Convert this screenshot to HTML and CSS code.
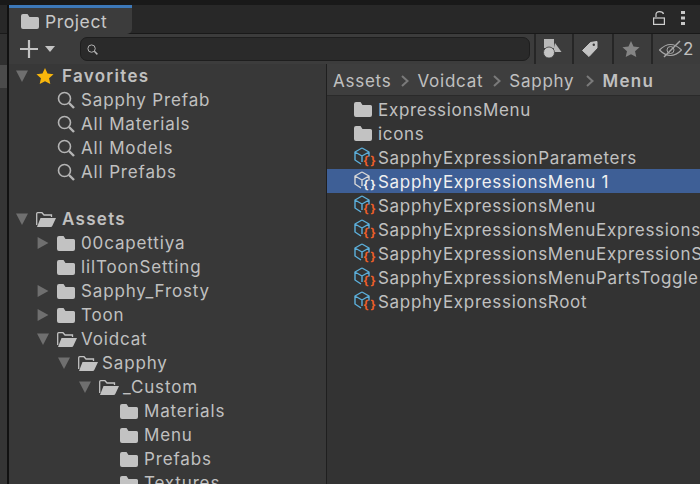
FILE: index.html
```html
<!DOCTYPE html>
<html lang="en">
<head>
<meta charset="utf-8">
<title>Project</title>
<link rel="stylesheet" href="styles.css">
</head>
<body>
<svg class="defs" width="0" height="0" aria-hidden="true">
  <defs>
    <symbol id="folder" viewBox="0 0 18 15"><path d="M0 2Q0 0 2 0H6.500L8.500 3H16.500Q18 3 18 4.500V13Q18 15 16 15H2Q0 15 0 13Z" fill="#c2c2c2"/></symbol>
    <symbol id="open" viewBox="0 0 20 15"><path d="M0.700 13V1.700Q0.700 0.700 1.700 0.700H6L8 3H15.500V5" fill="none" stroke="#c2c2c2" stroke-width="1.300"/><path d="M1 15L4.500 6H20L16.500 13.500Q16 15 14.500 15Z" fill="#c2c2c2"/></symbol>
    <symbol id="mag" viewBox="0 0 18 18"><circle cx="7.500" cy="7.500" r="6" fill="none" stroke="#b4b4b4" stroke-width="1.600"/><path d="M12 12L17 17" stroke="#b4b4b4" stroke-width="2.400"/></symbol>
    <symbol id="asset" viewBox="0 0 16 18"><path d="M8 1L15 5V9.500M8 1L1 5V13L7 17M1 5L8 9L15 5M8 9V15" fill="none" stroke="currentColor" stroke-width="1.400" stroke-linejoin="round"/></symbol>
    <symbol id="chev" viewBox="0 0 8 12"><path d="M1 1L6.500 6L1 11" fill="none" stroke="#7a7a7a" stroke-width="2"/></symbol>
  </defs>
</svg>
<div class="window">
  <div class="sidebar-strip"></div>
  <main class="panel">
    <header class="tabbar">
      <div class="tab"><svg class="tab-icon"><use href="#folder"/></svg><span>Project</span></div>
      <div class="tab-tools">
        <svg class="lock" viewBox="0 0 12 14"><path d="M3 6V3.500Q3 0.700 6.500 0.700T10.500 3" fill="none" stroke="#d0d0d0" stroke-width="1.200"/><rect x="0.600" y="7" width="10.800" height="6.400" fill="none" stroke="#d0d0d0" stroke-width="1.200"/></svg>
        <svg class="kebab" viewBox="0 0 4 14"><rect width="4" height="3" fill="#c8c8c8"/><rect y="5.500" width="4" height="3" fill="#c8c8c8"/><rect y="11" width="4" height="3" fill="#c8c8c8"/></svg>
      </div>
    </header>
    <div class="toolbar">
      <div class="add">
        <svg class="plus" viewBox="0 0 18 18"><path d="M9 0V18M0 9H18" stroke="#c4c4c4" stroke-width="2.200"/></svg>
        <span class="add-caret"></span>
      </div>
      <div class="search"><svg class="search-mag"><use href="#mag"/></svg></div>
      <div class="tool t1"><svg class="tool-icon" viewBox="0 0 20 20"><rect x="1" y="0" width="10" height="9" fill="#b8b8b8"/><path d="M12 4L18.500 13H10Z" fill="#b8b8b8"/><circle cx="6" cy="13.500" r="5.500" fill="#c4c4c4" stroke="#3c3c3c" stroke-width="0.800"/></svg></div>
      <div class="tool t2"><svg class="tag" viewBox="0 0 16 16"><path d="M0.500 9.500L8.500 1.500L15 0.500L15 7L7 15.500Z" fill="#c4c4c4" stroke="#c4c4c4" stroke-linejoin="round"/><circle cx="11.800" cy="3.800" r="1.200" fill="#3c3c3c"/></svg></div>
      <div class="tool t3"><svg class="fav" viewBox="0 0 20 20"><path d="M10 1L12.800 7.200L19.500 8L14.500 12.400L15.900 19L10 15.700L4.100 19L5.500 12.400L0.500 8L7.200 7.200Z" fill="#858585"/></svg></div>
      <div class="tool tool-last"><svg class="eye" viewBox="0 0 23 18"><path d="M0.500 10Q6 4.500 11.500 4.500T22.500 10Q17 15.500 11.500 15.500T0.500 10Z" fill="none" stroke="#a6a6a6" stroke-width="1.200"/><circle cx="11.500" cy="10" r="3.500" fill="none" stroke="#a6a6a6"/><path d="M5 17L21 1" stroke="#a6a6a6" stroke-width="1.500"/></svg><span>2</span></div>
    </div>
    <div class="columns">
      <nav class="tree">
        <div class="row lvl0 bold"><span class="caret down"></span><svg class="star" viewBox="0 0 20 20"><path d="M10 1L12.800 7.200L19.500 8L14.500 12.400L15.900 19L10 15.700L4.100 19L5.500 12.400L0.500 8L7.200 7.200Z" fill="#f8b60c"/></svg><span>Favorites</span></div>
        <div class="row lvl1"><span class="caret none"></span><svg class="ic-mag"><use href="#mag"/></svg><span>Sapphy Prefab</span></div>
        <div class="row lvl1"><span class="caret none"></span><svg class="ic-mag"><use href="#mag"/></svg><span>All Materials</span></div>
        <div class="row lvl1"><span class="caret none"></span><svg class="ic-mag"><use href="#mag"/></svg><span>All Models</span></div>
        <div class="row lvl1"><span class="caret none"></span><svg class="ic-mag"><use href="#mag"/></svg><span>All Prefabs</span></div>
        <div class="row spacer"></div>
        <div class="row lvl0 bold"><span class="caret down"></span><svg class="ic-open"><use href="#open"/></svg><span>Assets</span></div>
        <div class="row lvl1"><span class="caret right"></span><svg class="ic-folder"><use href="#folder"/></svg><span>00capettiya</span></div>
        <div class="row lvl1"><span class="caret none"></span><svg class="ic-folder"><use href="#folder"/></svg><span>lilToonSetting</span></div>
        <div class="row lvl1"><span class="caret right"></span><svg class="ic-folder"><use href="#folder"/></svg><span>Sapphy_Frosty</span></div>
        <div class="row lvl1"><span class="caret right"></span><svg class="ic-folder"><use href="#folder"/></svg><span>Toon</span></div>
        <div class="row lvl1"><span class="caret down"></span><svg class="ic-open"><use href="#open"/></svg><span>Voidcat</span></div>
        <div class="row lvl2"><span class="caret down"></span><svg class="ic-open"><use href="#open"/></svg><span>Sapphy</span></div>
        <div class="row lvl3"><span class="caret down"></span><svg class="ic-open"><use href="#open"/></svg><span>_Custom</span></div>
        <div class="row lvl4"><span class="caret none"></span><svg class="ic-folder"><use href="#folder"/></svg><span>Materials</span></div>
        <div class="row lvl4"><span class="caret none"></span><svg class="ic-folder"><use href="#folder"/></svg><span>Menu</span></div>
        <div class="row lvl4"><span class="caret none"></span><svg class="ic-folder"><use href="#folder"/></svg><span>Prefabs</span></div>
        <div class="row lvl4"><span class="caret none"></span><svg class="ic-folder"><use href="#folder"/></svg><span>Textures</span></div>
      </nav>
      <section class="content">
        <div class="crumbs">
          <span>Assets</span><svg class="sep"><use href="#chev"/></svg><span>Voidcat</span><svg class="sep"><use href="#chev"/></svg><span>Sapphy</span><svg class="sep sep-last"><use href="#chev"/></svg><span class="bold">Menu</span>
        </div>
        <div class="files">
          <div class="file"><svg class="f-folder"><use href="#folder"/></svg><span>ExpressionsMenu</span></div>
          <div class="file"><svg class="f-folder"><use href="#folder"/></svg><span>icons</span></div>
          <div class="file"><span class="asset"><svg><use href="#asset"/></svg><b>{}</b></span><span>SapphyExpressionParameters</span></div>
          <div class="file selected"><span class="asset"><svg><use href="#asset"/></svg><b>{}</b></span><span>SapphyExpressionsMenu 1</span></div>
          <div class="file"><span class="asset"><svg><use href="#asset"/></svg><b>{}</b></span><span>SapphyExpressionsMenu</span></div>
          <div class="file"><span class="asset"><svg><use href="#asset"/></svg><b>{}</b></span><span>SapphyExpressionsMenuExpressions</span></div>
          <div class="file"><span class="asset"><svg><use href="#asset"/></svg><b>{}</b></span><span>SapphyExpressionsMenuExpressionS</span></div>
          <div class="file"><span class="asset"><svg><use href="#asset"/></svg><b>{}</b></span><span>SapphyExpressionsMenuPartsToggle</span></div>
          <div class="file"><span class="asset"><svg><use href="#asset"/></svg><b>{}</b></span><span>SapphyExpressionsRoot</span></div>
        </div>
      </section>
    </div>
  </main>
</div>
</body>
</html>
```
FILE: styles.css
```css
* { box-sizing: border-box; }
html, body { margin: 0; height: 100%; overflow: hidden; background: #191919; }
body { font-family: Inter, "Liberation Sans", sans-serif; font-size: 17px; color: #c0c0c0; }
.defs { position: absolute; }
.window { display: flex; width: 700px; height: 484px; padding-top: 5px; overflow: hidden; }
.sidebar-strip { width: 7px; flex: none; background: linear-gradient(#282828 0 28px, #1a1a1a 28px 29px, #303030 29px 60px, #4b4b4b 60px 83px, #353535 83px); }
.panel { flex: 1; min-width: 0; display: flex; flex-direction: column; border-left: 2px solid #111; }
.tabbar { height: 29px; flex: none; display: flex; justify-content: space-between; background: #282828; border-bottom: 1px solid #191919; }
.tab { width: 123px; height: 29px; display: flex; align-items: center; gap: 6px; padding-left: 12px; background: #3c3c3c; border-top: 3px solid #3d78b8; border-radius: 0 0 5px 0; color: #c8c8c8; font-size: 17.500px; letter-spacing: 0.600px; }
.tab-icon { width: 18px; height: 15px; }
.tab-tools { display: flex; align-items: center; gap: 16px; padding: 0 15px 2px 0; }
.lock { width: 12px; height: 14px; }
.kebab { width: 4px; height: 14px; }
.toolbar { height: 30px; flex: none; display: flex; align-items: center; background: #3c3c3c; }
.add { width: 71px; flex: none; display: flex; align-items: center; gap: 7px; padding-left: 11px; }
.plus { width: 18px; height: 18px; }
.add-caret { width: 0; height: 0; border: 5px solid transparent; border-top: 6px solid #c4c4c4; border-bottom: 0; }
.search { flex: 1; height: 24px; background: #2a2a2a; border: 1px solid #1e1e1e; border-radius: 7px; display: flex; align-items: center; padding-left: 6px; margin-right: 4px; }
.search-mag { width: 11px; height: 11px; }
.tool { height: 30px; flex: none; display: flex; align-items: center; justify-content: center; border-left: 2px solid #262626; }
.t1 { width: 38px; padding-right: 3px; }
.t2 { width: 40px; padding-right: 7px; }
.t3 { width: 39px; padding-right: 4px; }
.tool-icon { width: 20px; height: 20px; }
.tag { width: 16px; height: 16px; }
.fav { width: 18px; height: 18px; }
.tool-last { width: 49px; gap: 1px; justify-content: flex-start; padding-left: 6px; }
.eye { width: 23px; height: 18px; flex: none; }
.columns { flex: 1; min-height: 0; display: flex; }
.tree { width: 318px; flex: none; background: #383838; border-right: 1px solid #1f1f1f; overflow: hidden; }
.row { height: 24px; display: flex; align-items: center; white-space: nowrap; letter-spacing: 0.850px; }
.spacer { height: 23px; }
.caret { width: 12px; height: 12px; flex: none; margin-right: 8px; }
.caret.down { background: #6f6f6f; clip-path: polygon(0 5%, 100% 5%, 50% 100%); }
.caret.right { background: #6f6f6f; clip-path: polygon(5% 0, 95% 50%, 5% 100%); }
.lvl0 { padding-left: 7px; }
.lvl1 { padding-left: 28px; }
.lvl2 { padding-left: 49px; }
.lvl3 { padding-left: 70px; }
.lvl4 { padding-left: 91px; }
.bold { font-weight: 600; letter-spacing: 1.300px; }
.star { width: 18px; height: 18px; margin-right: 8px; }
.ic-mag { width: 18px; height: 18px; margin-right: 6px; }
.ic-folder { width: 18px; height: 15px; margin-right: 6px; }
.ic-open { width: 20px; height: 15px; margin-right: 4px; }
.lvl0 .ic-open { margin-right: 6px; }
.content { flex: 1; min-width: 0; display: flex; flex-direction: column; background: #333; }
.crumbs { height: 32px; flex: none; display: flex; align-items: center; padding: 2px 0 0 6px; background: #3e3e3e; border-bottom: 1px solid #2a2a2a; letter-spacing: 0.750px; white-space: nowrap; }
.sep { width: 8px; height: 12px; flex: none; margin: 0 8px 0 10px; }
.sep-last { margin-left: 12px; }
.files { flex: 1; padding-top: 1px; }
.file { height: 24px; display: flex; align-items: center; padding: 1px 0 0 27px; white-space: nowrap; letter-spacing: 0.700px; }
.selected { background: #3e5f96; color: #f0f0f0; }
.f-folder { width: 18px; height: 15px; margin-right: 6px; }
.asset { position: relative; width: 24px; height: 24px; flex: none; color: #5cb0dc; }
.selected .asset { color: #d8d8d8; }
.asset svg { width: 16px; height: 18px; position: absolute; left: 0; top: 1px; }
.asset b { position: absolute; left: 9px; top: 8px; font-size: 12px; line-height: 13px; font-weight: 700; color: #ee5f28; letter-spacing: 1.500px; }
.selected .asset b { color: #f0f0f0; }
```
